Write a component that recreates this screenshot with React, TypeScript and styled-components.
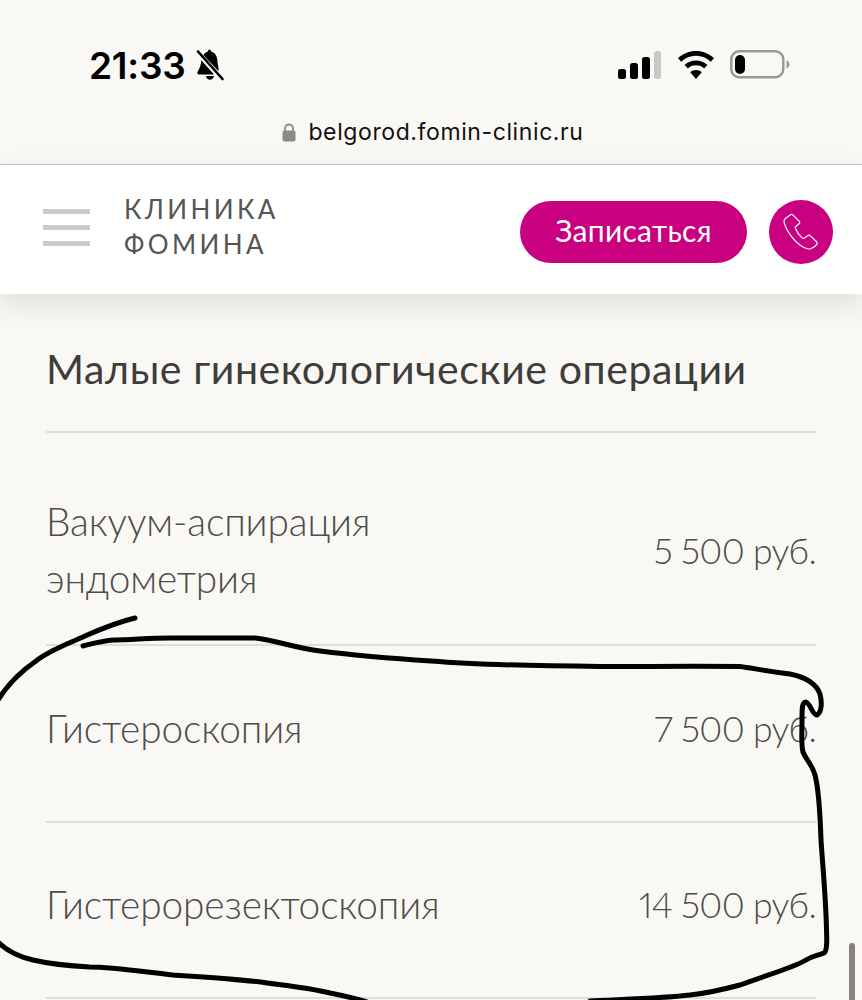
import React from 'react';
import styled, { createGlobalStyle } from 'styled-components';

type PriceItem = {
  name: string[];
  price: string;
  height: number;
  shiftDown: number;
  shiftUp: number;
};

const prices: PriceItem[] = [
  { name: ['Вакуум-аспирация', 'эндометрия'], price: '5 500 руб.', height: 213, shiftDown: 23, shiftUp: 0 },
  { name: ['Гистероскопия'], price: '7 500 руб.', height: 177, shiftDown: 0, shiftUp: 11 },
  { name: ['Гистерорезектоскопия'], price: '14 500 руб.', height: 176, shiftDown: 0, shiftUp: 11 },
];

const GlobalStyle = createGlobalStyle`
  html, body {
    margin: 0;
    padding: 0;
    background: #f9f8f4;
  }
  body {
    font-family: "Lato", "Liberation Sans", sans-serif;
  }
`;

const Phone = styled.div`
  position: relative;
  width: 862px;
  height: 1000px;
  overflow: hidden;
  background: #f9f8f4;
`;

const BrowserTop = styled.div`
  height: 165px;
  box-sizing: border-box;
  border-bottom: 1px solid #c6c5c0;
  display: flex;
  flex-direction: column;
`;

const StatusBar = styled.div`
  display: flex;
  align-items: center;
  justify-content: space-between;
  height: 64px;
  padding: 0 72px 0 89px;
  margin-top: 33px;
`;

const StatusLeft = styled.div`
  display: flex;
  align-items: center;
  gap: 9px;
`;

const Time = styled.span`
  font-family: "Inter", "Liberation Sans", sans-serif;
  font-weight: 600;
  font-size: 37px;
  letter-spacing: -0.2px;
  color: #000;
`;

const StatusRight = styled.div`
  display: flex;
  align-items: center;
  gap: 15px;
`;

const UrlBar = styled.div`
  display: flex;
  align-items: center;
  justify-content: center;
  gap: 12px;
  margin-top: 18px;
  padding-left: 4px;
  height: 34px;
`;

const UrlText = styled.span`
  font-family: "Inter", "Liberation Sans", sans-serif;
  font-size: 23px;
  letter-spacing: 0.6px;
  color: #111;
`;

const Header = styled.header`
  position: relative;
  z-index: 1;
  height: 129px;
  background: #fff;
  display: flex;
  align-items: center;
  padding: 0 29px 0 43px;
  box-shadow: 0 10px 26px rgba(90, 88, 76, 0.16);
`;

const Burger = styled.div`
  width: 47px;
  display: flex;
  flex-direction: column;
  gap: 11px;
  margin-right: 34px;
  margin-top: -5px;
`;

const BurgerLine = styled.span`
  display: block;
  height: 5px;
  background: #cbcbca;
`;

const Logo = styled.div`
  font-family: "Lato", "Liberation Sans", sans-serif;
  font-weight: 400;
  font-size: 26px;
  line-height: 35px;
  letter-spacing: 3.4px;
  color: #555;
  margin-top: -6px;
`;

const HeaderActions = styled.div`
  margin-left: auto;
  margin-top: 4px;
  display: flex;
  align-items: center;
  gap: 22px;
`;

const BookButton = styled.button`
  width: 227px;
  height: 62px;
  border: none;
  border-radius: 31px;
  background: #c9007f;
  color: #fff;
  font-family: "Lato", "Liberation Sans", sans-serif;
  font-weight: 400;
  font-size: 30px;
  letter-spacing: 0.3px;
  padding: 0 0 3px;
`;

const CallButton = styled.button`
  width: 64px;
  height: 64px;
  border: none;
  border-radius: 50%;
  background: #c9007f;
  display: flex;
  align-items: center;
  justify-content: center;
  padding: 0;
`;

const Content = styled.main`
  padding: 47px 46px 0;
`;

const Title = styled.h2`
  margin: 0;
  height: 90px;
  box-sizing: border-box;
  font-weight: 400;
  font-size: 41px;
  line-height: 56px;
  letter-spacing: 0.6px;
  color: #3d3d3b;
`;

const PriceRow = styled.div<{ $shiftDown: number; $shiftUp: number; $height: number }>`
  height: ${(p) => p.$height}px;
  padding-top: ${(p) => p.$shiftDown}px;
  padding-bottom: ${(p) => p.$shiftUp}px;
  box-sizing: border-box;
  border-top: 2px solid #dfded9;
  display: flex;
  align-items: center;
  justify-content: space-between;
  font-weight: 300;
  font-size: 38.8px;
  line-height: 57px;
  color: #4c4c49;
`;

const PriceName = styled.div`
  letter-spacing: -0.1px;
`;

const PriceValue = styled.div`
  white-space: nowrap;
  font-size: 35.5px;
  font-variant-numeric: proportional-nums;
  letter-spacing: -0.7px;
`;

const LastLine = styled.div`
  border-top: 2px solid #dfded9;
`;

const Scrollbar = styled.div`
  position: absolute;
  left: 849px;
  top: 943px;
  width: 6px;
  height: 60px;
  border-radius: 3px;
  background: #85837c;
`;

const Scribble = styled.svg`
  position: absolute;
  left: 0;
  top: 0;
  z-index: 2;
  pointer-events: none;
`;

const BellSlash = () => (
  <svg width="30" height="34" viewBox="0 0 30 34">
    <path
      d="M15 1.500c-1.400 0-2.300 1-2.400 2.300C10.800 4.400 9.300 5.500 8.300 7l15 16c.3-.6.3-1.100.3-1.900-.2-2.500-1-5-1.200-8-.2-4.700-1.800-8-5.900-9.300-.2-1.300-1.100-2.300-2.500-2.300zM6.300 12.200C6 16.500 4.800 20.300 2.700 23.400c-1 1.500-.2 3 1.700 3h14.700L6.300 12.200zM11 28c.3 2.300 2 3.800 4 3.800s3.700-1.500 4-3.800h-8z"
      fill="#000"
    />
    <path d="M3 3.500L27.500 31" stroke="#000" strokeWidth="2.600" strokeLinecap="round" fill="none" />
  </svg>
);

const SignalIcon = () => (
  <svg width="44" height="28" viewBox="0 0 44 28">
    <rect x="0" y="18" width="8" height="10" rx="2.500" fill="#000" />
    <rect x="12" y="12" width="8" height="16" rx="2.500" fill="#000" />
    <rect x="24" y="6" width="8" height="22" rx="2.500" fill="#000" />
    <rect x="36" y="0" width="7" height="28" rx="2.500" fill="#c9c8c3" />
  </svg>
);

const WifiIcon = () => (
  <svg width="38" height="28" viewBox="0 0 38 28">
    <path
      d="M19 0C12 0 5.800 2.700 1 7.200l3.200 3.500C8.100 7.100 13.300 4.800 19 4.800s10.900 2.300 14.800 5.900L37 7.200C32.200 2.700 26 0 19 0z"
      fill="#000"
    />
    <path
      d="M19 9.500c-4.400 0-8.400 1.700-11.400 4.500l3.300 3.500c2.100-2 5-3.200 8.100-3.200s6 1.200 8.100 3.200l3.300-3.500C27.400 11.200 23.400 9.500 19 9.500z"
      fill="#000"
    />
    <path d="M19 19c-2.200 0-4.200.9-5.700 2.300L19 28l5.700-6.700C23.200 19.900 21.200 19 19 19z" fill="#000" />
  </svg>
);

const BatteryIcon = () => (
  <svg width="60" height="30" viewBox="0 0 60 30">
    <rect x="1.250" y="1.250" width="52" height="26" rx="8" fill="none" stroke="#9a9993" strokeWidth="2.500" />
    <rect x="5" y="5" width="10" height="19" rx="5" fill="#000" />
    <path d="M56.500 10.500c2 .8 3 2.200 3 4s-1 3.200-3 4z" fill="#9a9993" />
  </svg>
);

const LockIcon = () => (
  <svg width="14" height="19" viewBox="0 0 14 19">
    <path d="M3 8V5.500a4 4 0 0 1 8 0V8" fill="none" stroke="#8a8a88" strokeWidth="1.800" />
    <rect x="0.500" y="7.500" width="13" height="11" rx="2" fill="#8a8a88" />
  </svg>
);

const PhoneIcon = () => (
  <svg width="36" height="38" viewBox="0 0 36 38" fill="none" stroke="#fff" strokeWidth="1.200" strokeLinejoin="round">
    <path d="M7.500 1.800L2.300 5.500C1 6.600.8 8.300 1.300 10.200 3.500 18 11.500 29.500 20.500 34.300c2.500 1.300 4.800 2.200 7.200 1.500 2.400-.8 5-2.500 6.200-4.700.5-.9.300-1.700-.3-2.300l-6.500-6.200c-.7-.6-1.500-.6-2.200-.1l-3.600 2.600c-.8.500-1.600.4-2.300-.2-2.600-2.300-5.400-6.500-6.600-9.600-.3-.9-.1-1.600.6-2.100l3.100-2.500c.7-.6.8-1.400.4-2.200L10.300 2.400c-.6-1-1.800-1.300-2.800-.6z" />
  </svg>
);

const App = () => {
  return (
    <Phone>
      <GlobalStyle />
      <BrowserTop>
        <StatusBar>
          <StatusLeft>
            <Time>21:33</Time>
            <BellSlash />
          </StatusLeft>
          <StatusRight>
            <SignalIcon />
            <WifiIcon />
            <BatteryIcon />
          </StatusRight>
        </StatusBar>
        <UrlBar>
          <LockIcon />
          <UrlText>belgorod.fomin-clinic.ru</UrlText>
        </UrlBar>
      </BrowserTop>
      <Header>
        <Burger>
          <BurgerLine />
          <BurgerLine />
          <BurgerLine />
        </Burger>
        <Logo>
          КЛИНИКА
          <br />
          ФОМИНА
        </Logo>
        <HeaderActions>
          <BookButton>Записаться</BookButton>
          <CallButton>
            <PhoneIcon />
          </CallButton>
        </HeaderActions>
      </Header>
      <Content>
        <Title>Малые гинекологические операции</Title>
        {prices.map((item) => (
          <PriceRow key={item.price} $height={item.height} $shiftDown={item.shiftDown} $shiftUp={item.shiftUp}>
            <PriceName>
              {item.name.map((line) => (
                <div key={line}>{line}</div>
              ))}
            </PriceName>
            <PriceValue>{item.price}</PriceValue>
          </PriceRow>
        ))}
        <LastLine />
      </Content>
      <Scribble width="862" height="1000" viewBox="0 0 862 1000" fill="none" stroke="#000" strokeWidth="5" strokeLinecap="round" strokeLinejoin="round">
        <path d="M135 618C118 622 103 628 85 636C68 644 50 650 36 661C20 672 8 684 -2 700" />
        <path d="M83 646C95 643 105 640 115 640C130 640 150 638 170 638C195 638 230 638 255 638C275 640 295 648 320 651C360 656 400 659 431 661C480 665 540 666 600 666.500C650 666.500 700 666 740 666.500C752 668 765 671 790 674C805 677 816 683 820 694C822 702 822 712 817 715C812 715 811 704 806 702C802 702 802 708 802 720C802 735 801 745 803 752C806 760 812 764 815 775C819 790 820 810 821 840C823 870 826 900 826.500 930C827 942 827 951 824 953C816 956 812 956 806 960C795 967 770 974 740 985C725 989 710 993 690 995C665 998 630 999 590 1001" />
        <path d="M-2 942C8 952 20 957 33 960C50 964 70 966 90 967C110 967 130 970 173 975C205 977 240 979 267 983C290 986 310 988 330 993C345 996 355 998 370 1003" />
      </Scribble>
      <Scrollbar />
    </Phone>
  );
};

export default App;
